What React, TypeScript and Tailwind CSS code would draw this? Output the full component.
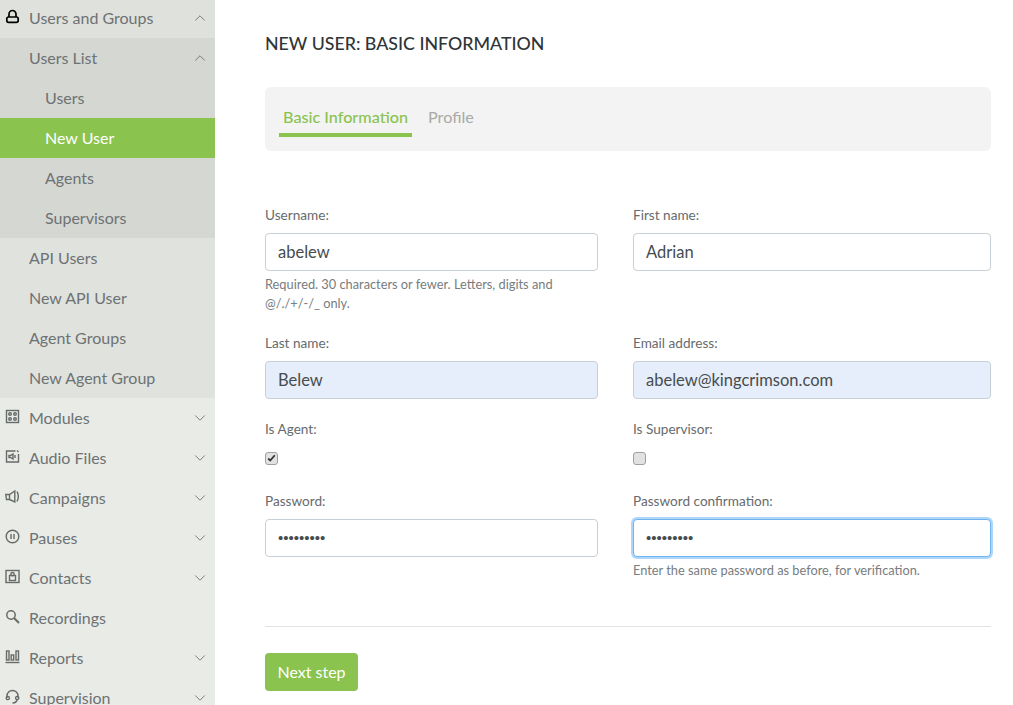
import { ChevronDown, ChevronUp } from 'lucide-react'
import type { ReactNode } from 'react'

const font = "font-['Lato','Noto_Sans',sans-serif]"

const icons: Record<string, ReactNode> = {
  users: (
    <>
      <path d="M4 8V5a3.5 3.5 0 0 1 7 0v3" strokeWidth="1.7" />
      <rect x="1.8" y="8" width="11.4" height="5.4" rx="1.8" strokeWidth="1.7" />
    </>
  ),
  modules: (
    <>
      <rect x="1.5" y="1.5" width="12" height="12" />
      <circle cx="5" cy="5" r="1.3" />
      <circle cx="10" cy="5" r="1.3" />
      <circle cx="5" cy="10" r="1.3" />
      <circle cx="10" cy="10" r="1.3" />
    </>
  ),
  audio: (
    <>
      <path d="M10.5 2H1.5v11h12V5" />
      <path d="M4 6.5h1.5L8 5v5L5.5 8.5H4z" />
      <path d="M10 6v3M12 1.5l1.5 1.5" />
    </>
  ),
  campaigns: (
    <>
      <path d="M.8 5.5h3.7L9.8 2v11L4.5 10.5H1.5z" />
      <path d="M4.5 5.5v5M12 2.5c1.6 3 1.6 7 0 10" />
    </>
  ),
  pauses: (
    <>
      <circle cx="7.5" cy="7.5" r="6.3" />
      <path d="M6 5v5M9 5v5" />
    </>
  ),
  contacts: (
    <>
      <rect x="1" y="1.5" width="13" height="12" />
      <rect x="4.5" y="6.5" width="6" height="5" />
      <circle cx="7.5" cy="5.2" r="1.7" />
    </>
  ),
  recordings: (
    <>
      <circle cx="6" cy="6" r="4.2" strokeWidth="1.5" />
      <path d="M9 9l5 5" strokeWidth="2" />
    </>
  ),
  reports: (
    <>
      <rect x="1.5" y="2" width="2.5" height="9" />
      <rect x="6.2" y="6" width="2.5" height="5" />
      <rect x="11" y="2" width="2.5" height="9" />
      <path d="M.5 13.5h14" />
    </>
  ),
  supervision: (
    <>
      <path d="M2 9V7a5.5 5.5 0 0 1 11 0v2" />
      <circle cx="2.8" cy="9" r="1.6" />
      <circle cx="12.2" cy="9" r="1.6" />
      <path d="M12 11c-.5 2-2.5 3-4.5 3" />
    </>
  ),
}

function NavIcon({ name, dark }: { name: string; dark?: boolean }) {
  return (
    <svg
      viewBox="0 0 15 15"
      fill="none"
      stroke="currentColor"
      strokeWidth="1.4"
      className={`w-[15px] h-[15px] shrink-0 ${dark ? 'text-black' : 'text-[#666b69]'}`}
    >
      {icons[name]}
    </svg>
  )
}

function NavRow({
  label,
  icon,
  open,
  closed,
  indent = 'pl-[29px]',
  active,
  bg = '',
}: {
  label: string
  icon?: string
  open?: boolean
  closed?: boolean
  indent?: string
  active?: boolean
  bg?: string
}) {
  return (
    <div
      className={`relative h-10 flex items-center pr-[6px] text-[16px] ${indent} ${
        active ? 'bg-[#8bc34f] text-white' : `text-[#6d7274] ${bg}`
      }`}
    >
      {icon && (
        <span className="absolute left-[5px] top-[11px]">
          <NavIcon name={icon} dark={icon === 'users'} />
        </span>
      )}
      <span className="flex-1">{label}</span>
      {open && <ChevronUp size={18} strokeWidth={1.2} className="text-[#6d7274] -mt-[1px]" />}
      {closed && <ChevronDown size={18} strokeWidth={1.2} className="text-[#6d7274] -mt-[1px]" />}
    </div>
  )
}

function Sidebar() {
  return (
    <aside className="w-[215px] shrink-0 h-[705px] overflow-hidden bg-[#e9ebe6]">
      <div className="-mt-[2px]">
        <NavRow label="Users and Groups" icon="users" open bg="bg-[#dfe1dc]" />
        <div className="bg-[#e0e2dd]">
          <div className="bg-[#d5d7d2]">
            <NavRow label="Users List" open />
            <NavRow label="Users" indent="pl-[45px]" />
            <NavRow label="New User" indent="pl-[45px]" active />
            <NavRow label="Agents" indent="pl-[45px]" />
            <NavRow label="Supervisors" indent="pl-[45px]" />
          </div>
          <NavRow label="API Users" />
          <NavRow label="New API User" />
          <NavRow label="Agent Groups" />
          <NavRow label="New Agent Group" />
        </div>
        <NavRow label="Modules" icon="modules" closed />
        <NavRow label="Audio Files" icon="audio" closed />
        <NavRow label="Campaigns" icon="campaigns" closed />
        <NavRow label="Pauses" icon="pauses" closed />
        <NavRow label="Contacts" icon="contacts" closed />
        <NavRow label="Recordings" icon="recordings" />
        <NavRow label="Reports" icon="reports" closed />
        <NavRow label="Supervision" icon="supervision" closed />
      </div>
    </aside>
  )
}

function Field({
  label,
  value,
  type = 'text',
  filled,
  focused,
  help,
}: {
  label: string
  value: string
  type?: string
  filled?: boolean
  focused?: boolean
  help?: ReactNode
}) {
  return (
    <div>
      <label className="block h-[27px] text-[13.6px] leading-[18px] text-[#666b6d]">{label}</label>
      <input
        readOnly
        type={type}
        value={value}
        className={`block w-full h-[38px] px-3 pb-[1px] rounded-[4px] border text-[#464c4e] outline-none ${
          type === 'password' ? "text-[15px] font-['Liberation_Sans']" : 'text-[16.5px]'
        } ${filled ? 'bg-[#e6eefb]' : 'bg-white'} ${
          focused ? 'border-[#6fb4f0] shadow-[0_0_0_2px_#aed6fa]' : 'border-[#c9cfd6]'
        }`}
      />
      {help && <div className="mt-[4px] text-[12.8px] leading-[19px] text-[#777c7e]">{help}</div>}
    </div>
  )
}

function Check({ label, checked }: { label: string; checked?: boolean }) {
  return (
    <div>
      <label className="block h-[27px] text-[13.6px] leading-[18px] text-[#666b6d]">{label}</label>
      <div className="mt-[5px] w-[13px] h-[13px] rounded-[3px] border border-[#a0a0a0] bg-[#e2e2e2] flex items-center justify-center">
        {checked && (
          <svg viewBox="0 0 11 11" className="w-[9px] h-[9px]" fill="none" stroke="#333" strokeWidth="2.2">
            <path d="M1.5 5.5l2.5 2.5 5.5-6.5" />
          </svg>
        )}
      </div>
    </div>
  )
}

export default function App() {
  return (
    <div className={`flex h-[705px] overflow-hidden bg-white ${font}`}>
      <Sidebar />
      <main className="w-[726px] ml-[50px]">
        <h1 className="mt-[33px] h-[21px] text-[17.8px] leading-[21px] font-medium text-[#2f3538] uppercase">
          New user: Basic information
        </h1>
        <div className="mt-[33px] h-[64px] rounded-[6px] bg-[#f3f3f3] flex px-[14px] gap-[12px] text-[16.2px] leading-[22px]">
          <div className="h-[50px] px-1 pt-[19px] border-b-4 border-[#8bc34f] text-[#8bc34f] font-medium">
            Basic Information
          </div>
          <div className="h-[50px] px-1 pt-[19px] text-[#a9a9a9]">Profile</div>
        </div>
        <div className="mt-[55px] grid grid-cols-[333px_358px] gap-x-[35px]">
          <div className="h-[128px]">
            <Field
              label="Username:"
              value="abelew"
              help={
                <>
                  Required. 30 characters or fewer. Letters, digits and
                  <br />
                  @/./+/-/_ only.
                </>
              }
            />
          </div>
          <Field label="First name:" value="Adrian" />
          <div className="h-[78px]">
            <Field label="Last name:" value="Belew" filled />
          </div>
          <Field label="Email address:" value="abelew@kingcrimson.com" filled />
          <div className="h-[80px] pt-[8px]">
            <Check label="Is Agent:" checked />
          </div>
          <div className="h-[80px] pt-[8px]">
            <Check label="Is Supervisor:" />
          </div>
          <Field label="Password:" value="aaaaaaaaa" type="password" />
          <Field
            label="Password confirmation:"
            value="aaaaaaaaa"
            type="password"
            focused
            help="Enter the same password as before, for verification."
          />
        </div>
        <div className="mt-[46px] border-t border-[#e3e3e3]" />
        <button className="mt-[26px] h-[38px] w-[93px] rounded-[4px] bg-[#8bc34f] text-white text-[16px]">
          Next step
        </button>
      </main>
    </div>
  )
}
